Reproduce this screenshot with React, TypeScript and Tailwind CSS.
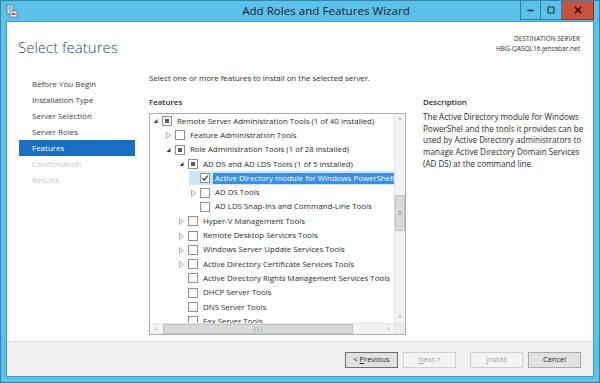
import { Minus, Square, X } from "lucide-react";

type Row = {
  level: number;
  expander: "open" | "closed" | null;
  check: "partial" | "none" | "checked";
  label: string;
  selected?: boolean;
};

const rows: Row[] = [
  { level: 0, expander: "open", check: "partial", label: "Remote Server Administration Tools (1 of 40 installed)" },
  { level: 1, expander: "closed", check: "none", label: "Feature Administration Tools" },
  { level: 1, expander: "open", check: "partial", label: "Role Administration Tools (1 of 28 installed)" },
  { level: 2, expander: "open", check: "partial", label: "AD DS and AD LDS Tools (1 of 5 installed)" },
  { level: 3, expander: null, check: "checked", label: "Active Directory module for Windows PowerShell", selected: true },
  { level: 3, expander: "closed", check: "none", label: "AD DS Tools" },
  { level: 3, expander: null, check: "none", label: "AD LDS Snap-Ins and Command-Line Tools" },
  { level: 2, expander: "closed", check: "none", label: "Hyper-V Management Tools" },
  { level: 2, expander: "closed", check: "none", label: "Remote Desktop Services Tools" },
  { level: 2, expander: "closed", check: "none", label: "Windows Server Update Services Tools" },
  { level: 2, expander: "closed", check: "none", label: "Active Directory Certificate Services Tools" },
  { level: 2, expander: null, check: "none", label: "Active Directory Rights Management Services Tools" },
  { level: 2, expander: null, check: "none", label: "DHCP Server Tools" },
  { level: 2, expander: null, check: "none", label: "DNS Server Tools" },
  { level: 2, expander: null, check: "none", label: "Fax Server Tools" },
];

const navItems = [
  { label: "Before You Begin", state: "normal" },
  { label: "Installation Type", state: "normal" },
  { label: "Server Selection", state: "normal" },
  { label: "Server Roles", state: "normal" },
  { label: "Features", state: "active" },
  { label: "Confirmation", state: "disabled" },
  { label: "Results", state: "disabled" },
];

const descriptionLines = [
  "The Active Directory module for Windows",
  "PowerShel and the tools it provides can be",
  "used by Active Directory administrators to",
  "manage Active Directory Domain Services",
  "(AD DS) at the command line.",
];

const indentClass = ["ml-0", "ml-[13px]", "ml-[26px]", "ml-[38px]"];

const Expander = ({ kind }: { kind: Row["expander"] }) => {
  if (kind === "open") {
    return (
      <svg width="11" height="10" viewBox="0 0 11 10" className="shrink-0">
        <polygon points="2.5,7 6.5,3 6.5,7" fill="#3a3a3a" />
      </svg>
    );
  }

  if (kind === "closed") {
    return (
      <svg width="11" height="10" viewBox="0 0 11 10" className="shrink-0">
        <polygon points="2.5,2.5 6.5,5.5 2.5,8.5" fill="none" stroke="#a6a6a6" strokeWidth="0.9" />
      </svg>
    );
  }

  return <span className="w-[11px] shrink-0" />;
};

const CheckBox = ({ state }: { state: Row["check"] }) => (
  <span className="flex h-[10px] w-[10px] shrink-0 items-center justify-center border border-[#8f8f8f] bg-white">
    {state === "partial" && (
      <span className="h-[4px] w-[4px] bg-[#5a5a5a]" />
    )}
    {state === "checked" && (
      <svg width="8" height="8" viewBox="0 0 8 8">
        <polyline points="1.2,4.2 3.2,6.2 6.8,1.6" fill="none" stroke="#333" strokeWidth="1.1" />
      </svg>
    )}
  </span>
);

const App = () => {
  return (
    <div className="flex h-[383px] w-[600px] flex-col overflow-hidden border border-[#2f87b0] bg-[#5dc2ea] font-['Open_Sans',sans-serif] text-[#1e1e1e]">
      {/* Title bar */}
      <div className="relative flex h-[20px] shrink-0 items-center justify-center">
        <div className="absolute left-[5px] top-[3px]">
          <svg width="12" height="14" viewBox="0 0 12 14">
            <rect x="1" y="1" width="6" height="9" fill="#e8f4fb" stroke="#3c6f93" strokeWidth="0.8" />
            <rect x="2.5" y="2.5" width="3" height="1" fill="#3c6f93" />
            <rect x="2.5" y="4.5" width="3" height="1" fill="#3c6f93" />
            <rect x="4" y="7" width="7" height="6" fill="#f4f4f4" stroke="#56738a" strokeWidth="0.8" />
            <rect x="5.5" y="9" width="4" height="2" fill="#c24a3a" />
          </svg>
        </div>

        <span className="pl-[52px] text-[11.6px] text-[#1a1a1a]">
          Add Roles and Features Wizard
        </span>

        <div className="absolute right-[5px] top-0 flex h-[19px]">
          <div className="flex w-[21px] items-center justify-center border border-t-0 border-[#2f7ea5] bg-[#5dc2ea]">
            <Minus size={9} strokeWidth={4} className="text-[#14303f]" />
          </div>
          <div className="flex w-[21px] items-center justify-center border border-l-0 border-t-0 border-[#2f7ea5] bg-[#5dc2ea]">
            <Square size={8} strokeWidth={3.5} className="text-[#14303f]" />
          </div>
          <div className="flex w-[32px] items-center justify-center border border-l-0 border-t-0 border-[#8c2f25] bg-[#c7533f]">
            <X size={10} strokeWidth={4} className="text-[#2b0d08]" />
          </div>
        </div>
      </div>

      {/* Client area */}
      <div className="mx-[5px] mb-[5px] flex flex-1 flex-col border border-[#3f9cc5] bg-white">
        {/* Header */}
        <div className="flex h-[52px] shrink-0 justify-between pl-[11px] pr-[13px]">
          <h1 className="mt-[18px] text-[15px] font-light leading-none text-[#2c4560]">
            Select features
          </h1>

          <div className="mt-[12px] text-right text-[6.5px] leading-[10px] text-[#2a2a2a]">
            <p>DESTINATION SERVER</p>
            <p>HBG-QASQL16.jenzabar.net</p>
          </div>
        </div>

        {/* Body */}
        <div className="flex flex-1">
          {/* Nav */}
          <div className="w-[128px] shrink-0 pl-[12px] pt-[2px]">
            {navItems.map((item) => (
              <div
                key={item.label}
                className={
                  item.state === "active"
                    ? "flex h-[16px] items-center bg-[#1a6fc2] pl-[13px] text-[8px] text-white"
                    : item.state === "disabled"
                    ? "flex h-[16px] items-center pl-[13px] text-[8px] text-[#c4c4c4]"
                    : "flex h-[16px] items-center pl-[13px] text-[8px] text-[#3b3b3b]"
                }
              >
                {item.label}
              </div>
            ))}
          </div>

          <div className="ml-[2px] mt-[-2px] w-px self-stretch bg-[#e3e3e3]" />

          {/* Main */}
          <div className="flex flex-1 flex-col pl-[12px]">
            <p className="mt-[-1px] text-[7.9px] leading-[10px] text-[#2a2a2a]">
              Select one or more features to install on the selected server.
            </p>

            <div className="mt-[14px] flex gap-[17px]">
              {/* Features column */}
              <div className="flex flex-col">
                <p className="text-[7.9px] font-semibold leading-[10px] text-[#2a2a2a]">
                  Features
                </p>

                <div className="mt-[6px] flex h-[222px] w-[257px] flex-col border border-[#adadad]">
                  <div className="flex flex-1 overflow-hidden">
                    <div className="flex-1 overflow-hidden pl-[1px]">
                      {rows.map((row) => (
                        <div
                          key={row.label}
                          className={
                            row.selected
                              ? `flex h-[14.3px] items-center whitespace-nowrap bg-[#cce6f8] ${indentClass[row.level]}`
                              : `flex h-[14.3px] items-center whitespace-nowrap ${indentClass[row.level]}`
                          }
                        >
                          <Expander kind={row.expander} />
                          <CheckBox state={row.check} />
                          <span
                            className={
                              row.selected
                                ? "ml-[3px] bg-[#3b8fe0] px-[2px] text-[7.9px] leading-[11px] text-white"
                                : "ml-[3px] px-[2px] text-[7.9px] leading-[11px] text-[#2a2a2a]"
                            }
                          >
                            {row.label}
                          </span>
                        </div>
                      ))}
                    </div>

                    {/* Vertical scrollbar */}
                    <div className="flex w-[11px] shrink-0 flex-col border-l border-[#e4e4e4] bg-[#f3f3f3]">
                      <div className="flex h-[11px] items-center justify-center text-[6px] text-[#7a7a7a]">
                        ˄
                      </div>
                      <div className="mt-[70px] flex h-[36px] items-center justify-center border border-[#c2c2c2] bg-[#d9d9d9]">
                        <span className="text-[6px] leading-none text-[#777]">≡</span>
                      </div>
                      <div className="flex-1" />
                      <div className="flex h-[11px] items-center justify-center text-[6px] text-[#7a7a7a]">
                        ˅
                      </div>
                    </div>
                  </div>

                  {/* Horizontal scrollbar */}
                  <div className="flex h-[11px] shrink-0 border-t border-[#e4e4e4] bg-[#f3f3f3]">
                    <div className="flex w-[11px] items-center justify-center text-[7px] text-[#7a7a7a]">
                      ‹
                    </div>
                    <div className="ml-[2px] flex w-[190px] items-center justify-center border border-[#c2c2c2] bg-[#d9d9d9]">
                      <span className="text-[6px] leading-none text-[#777]">|||</span>
                    </div>
                    <div className="flex-1" />
                    <div className="flex w-[11px] items-center justify-center text-[7px] text-[#7a7a7a]">
                      ›
                    </div>
                    <div className="w-[11px] border-l border-[#e4e4e4] bg-[#ececec]" />
                  </div>
                </div>
              </div>

              {/* Description column */}
              <div className="flex w-[170px] flex-col">
                <p className="text-[7.9px] font-semibold leading-[10px] text-[#2a2a2a]">
                  Description
                </p>

                <div className="mt-[4px] text-[8.1px] leading-[11.7px] text-[#2a2a2a]">
                  {descriptionLines.map((line) => (
                    <p key={line} className="whitespace-nowrap">
                      {line}
                    </p>
                  ))}
                </div>
              </div>
            </div>
          </div>
        </div>

        {/* Footer */}
        <div className="flex h-[35px] shrink-0 items-center justify-end gap-[5px] border-t border-[#dfdfdf] bg-[#f0f0f0] pr-[12px] pt-[2px]">
          <button
            type="button"
            className="h-[16px] w-[53px] border border-[#6f6f6f] bg-[#e2e2e2] text-[7.5px] text-[#1e1e1e]"
          >
            &lt; <span className="underline">P</span>revious
          </button>

          <button
            type="button"
            className="h-[16px] w-[53px] border border-[#cfcfcf] bg-[#f4f4f4] text-[7.5px] text-[#a3a3a3]"
          >
            <span className="underline">N</span>ext &gt;
          </button>

          <button
            type="button"
            className="ml-[9px] h-[16px] w-[53px] border border-[#cfcfcf] bg-[#f4f4f4] text-[7.5px] text-[#a3a3a3]"
          >
            <span className="underline">I</span>nstall
          </button>

          <button
            type="button"
            className="h-[16px] w-[53px] border border-[#a9a9a9] bg-[#e2e2e2] text-[7.5px] text-[#1e1e1e]"
          >
            Cancel
          </button>
        </div>
      </div>
    </div>
  );
};

export default App;
